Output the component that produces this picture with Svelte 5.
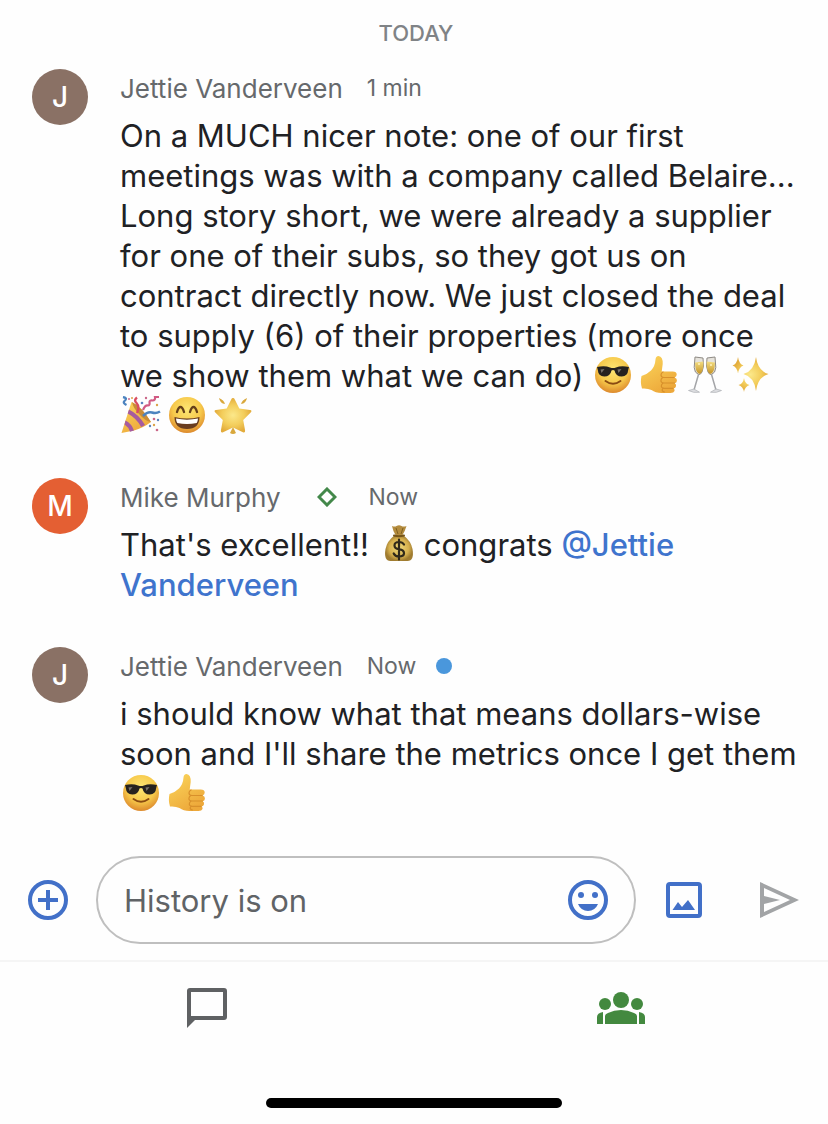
<script>
  let draft = $state('');
  let activeTab = $state('rooms');

  const messages = [
    {
      author: 'Jettie Vanderveen',
      initial: 'J',
      color: 'brown',
      time: '1 min',
      parts: [
        { text: 'On a MUCH nicer note: one of our first meetings was with a company called Belaire... Long story short, we were already a supplier for one of their subs, so they got us on contract directly now. We just closed the deal to supply (6) of their properties (more once we show them what we can do) ' },
        { emoji: 'sunglasses' },
        { emoji: 'thumbs up' },
        { emoji: 'clinking glasses' },
        { emoji: 'sparkles' },
        { emoji: 'party popper' },
        { emoji: 'grinning' },
        { emoji: 'glowing star' }
      ]
    },
    {
      author: 'Mike Murphy',
      initial: 'M',
      color: 'orange',
      time: 'Now',
      external: true,
      parts: [
        { text: "That's excellent!! " },
        { emoji: 'money bag' },
        { text: 'congrats ' },
        { mention: '@Jettie Vanderveen' }
      ]
    },
    {
      author: 'Jettie Vanderveen',
      initial: 'J',
      color: 'brown',
      time: 'Now',
      unread: true,
      parts: [
        { text: "i should know what that means dollars-wise soon and I'll share the metrics once I get them " },
        { emoji: 'sunglasses' },
        { emoji: 'thumbs up' }
      ]
    }
  ];
</script>

{#snippet emoji(name)}
  <svg class="emoji" viewBox="0 0 42 40" role="img" aria-label={name}>
    {#if name === 'sunglasses'}
      <circle cx="21" cy="19" r="18" fill="url(#face)" />
      <path d="M5 11q8-1.500 13 .5q3 1 6 0q5-2 13-.5l-.8 3q-.4 6-6.500 6.500q-6 0-7.200-6q-1.500-1.200-3 0q-1.200 6-7.200 6q-6.100-.5-6.500-6.500z" fill="#26221f" />
      <path d="M8.500 13.500l4-.5l-3 4zM25.500 13.500l4-.5l-3 4z" fill="#77716b" />
      <path d="M13.500 25q7.500 5.500 15 0" fill="none" stroke="#8a4b12" stroke-width="2" stroke-linecap="round" />
    {:else if name === 'thumbs up'}
      <path d="M3.500 20q6-2 9.500-5.500q4-4 4.500-11q.3-3.500 3-3.500q4.500.5 4.200 8l-1 7.500h11q4 0 4 3q0 2-2 3q2.500 1 2.200 3.200q-.2 2-2.200 2.600q1.800 1 1.300 3q-.5 1.800-2.300 2.200q1.300 1 .8 2.500q-.7 2-4 2h-9q-6 0-10-3q-4-2-9.500-1.500q-2-6-.5-12.500z" fill="url(#skin)" />
      <path d="M36 21.500h-10q-3 0-3-2.500q0-2 2-3M36.500 27h-10.500q-3.500-.2-3-3q.2-1.500 1.500-2.300M35 32.300h-9q-3-.3-2.600-2.800q.2-1.500 1.500-2.300M26.500 36q-2.500-.5-2.300-2.200q.1-1 1-1.600" fill="none" stroke="#d8902b" stroke-width="1.200" stroke-linecap="round" />
    {:else if name === 'clinking glasses'}
      <path d="M11 1l8 1q1.500 9-1 14q-1.500 3-3.500 2.500q-4-1.500-4.300-7zM31 1l-8 1q-1.500 9 1 14q1.500 3 3.500 2.500q4-1.500 4.300-7z" fill="#e6e3dc" stroke="#8e8a84" stroke-width="1" />
      <path d="M11 6.500l8.300-1q.5 6.500-1.500 10.500q-1.500 2.200-3 1.800q-3.500-1.800-3.800-11.300zM31 6.500l-8.300-1q-.5 6.500 1.500 10.500q1.500 2.200 3 1.800q3.500-1.800 3.800-11.300z" fill="url(#wine)" />
      <path d="M14.500 18.500l-4.500 15.500M27.500 18.500l4.500 15.500" stroke="#a4a5a8" stroke-width="1.500" />
      <path d="M4.500 34.500l5.500-1.500l5.500 3.200q-6 1.200-11-1.700zM37.500 34.500l-5.500-1.500l-5.500 3.200q6 1.200 11-1.700z" fill="#dcdde0" stroke="#aeb0b4" stroke-width=".7" />
      <circle cx="15" cy="8" r="1" fill="#fff3bf" />
      <circle cx="27" cy="9" r="1" fill="#fff3bf" />
    {:else if name === 'sparkles'}
      <path d="M26 1q1.800 14 12.500 17q-10.700 3-12.500 17q-1.800-14-12.500-17q10.700-3 12.500-17zM8 1q1 7 5.500 8.500q-4.500 1.500-5.500 8q-1-6.500-5.500-8q4.500-1.500 5.500-8.500zM14 22q1 6 5.500 7q-4.500 1.500-5.500 7q-1-5.500-5.500-7q4.500-1 5.500-7z" fill="url(#star)" />
    {:else if name === 'party popper'}
      <path d="M1.500 37l10-31q9 4 19.500 20q-8 6-17 8.500z" fill="url(#skin)" />
      <path d="M9 13.500q10 5 16 15.500l-3.800 2q-5-9-13.500-13.500zM5.500 24.500q6 3 8.500 10l-4 1.200q-1.500-4.700-5.500-7.200z" fill="#a65b9f" />
      <path d="M12 6q10 5 19 20q-6-1-11.500-7.500q-6.500-6.500-7.500-12.500z" fill="#c88c38" />
      <path d="M17 17q3-6-.5-10q-3-3 .5-5.500" fill="none" stroke="#d84c61" stroke-width="2.400" />
      <path d="M3 1q5 1 1.500 4q-2 2 2 4" fill="none" stroke="#4c83bf" stroke-width="2.300" />
      <path d="M23 14q2-5 5-4.500q2 0 1.500-3.500q0-2 3-1.500q3 0 2.500-3.500h4" fill="none" stroke="#d15a83" stroke-width="2.200" />
      <path d="M23 20q5-5 9-3.500q4 1.500 8-1" fill="none" stroke="#4c83bf" stroke-width="2.500" />
      <g fill="#5d83bd"><circle cx="22" cy="7" r="1.300" /><circle cx="30" cy="30" r="1.200" /><circle cx="38" cy="24" r="1.200" /></g>
      <g fill="#ca6789"><circle cx="26" cy="2" r="1.200" /><circle cx="34" cy="23" r="1.300" /><circle cx="37" cy="34" r="1.300" /><circle cx="9" cy="3" r="1" /></g>
      <g fill="#dca34a"><circle cx="37" cy="9" r="1.200" /><circle cx="34" cy="29" r="1.200" /><circle cx="12" cy="2" r="1" /></g>
    {:else if name === 'grinning'}
      <circle cx="21" cy="19" r="18" fill="url(#face)" />
      <path d="M11 16q1.500-5 3.500-5t3.500 5M24 16q1.500-5 3.500-5t3.500 5" fill="none" stroke="#66401a" stroke-width="2.300" stroke-linecap="round" />
      <path d="M8.500 21q12.500 3 25 0q0 12-12.500 12t-12.500-12z" fill="#693d20" />
      <path d="M10 22.500q11 2.300 22 0q-.2 3-1.300 4.500q-9.700 1.800-19.400 0q-1.100-1.500-1.300-4.500z" fill="#fff" />
    {:else if name === 'glowing star'}
      <path d="M21 2q1.200 0 1.800 1.400l4.500 9.200l10.700 1.300q2.600.5.700 2.500l-7.500 7.600l1.900 10.500q.2 2.700-2.200 1.700l-9.900-4.700l-9.900 4.700q-2.400 1-2.200-1.700l1.900-10.500l-7.500-7.600q-1.900-2 .7-2.500l10.700-1.300l4.500-9.200q.6-1.400 1.800-1.400z" fill="url(#star)" />
      <path d="M7 2q5 2 6 6q-5-.5-6-6zM35 2q-5 2-6 6q5-.5 6-6zM21 31l3 6q-3 2-6 0z" fill="#d9a83c" />
    {:else if name === 'money bag'}
      <path d="M14 1q3 1 4.500 0q2.500-1.500 5 0q2 1 5 0q-1.500 5-4 9h-7q-2.500-4-3.500-9z" fill="#b38b3d" />
      <path d="M17 10h8q8 6 9.500 14q2 12-5 12h-17q-7 0-5-12q1.500-8 9.500-14z" fill="url(#bag)" />
      <path d="M18 3l2 6M25 3l-2 6" stroke="#806021" />
      <path d="M16 10.500q5 1.500 10 0" fill="none" stroke="#75551b" stroke-width="2" stroke-linecap="round" />
      <path d="M26 19.500q-1.500-2.500-5-2.500q-4.500 0-4.500 3.500q0 3 4.500 3.700q5 .8 5 4t-5 3.300q-4 0-5.300-3M21 14.500v20" fill="none" stroke="#30291a" stroke-width="2.200" stroke-linecap="round" />
    {/if}
  </svg>
{/snippet}

<div class="chat">
  <svg class="gradients" aria-hidden="true">
    <defs>
      <radialGradient id="face" cx=".5" cy=".35" r=".65">
        <stop offset="0" stop-color="#fde674" />
        <stop offset=".6" stop-color="#f7c94b" />
        <stop offset="1" stop-color="#dd8a2d" />
      </radialGradient>
      <linearGradient id="skin" x2=".6" y2="1">
        <stop offset="0" stop-color="#fbd75c" />
        <stop offset="1" stop-color="#eda83a" />
      </linearGradient>
      <linearGradient id="wine" x2="0" y2="1">
        <stop offset="0" stop-color="#f3dd82" />
        <stop offset="1" stop-color="#c59426" />
      </linearGradient>
      <radialGradient id="star">
        <stop offset="0" stop-color="#fbe88a" />
        <stop offset=".6" stop-color="#f3cd5b" />
        <stop offset="1" stop-color="#e3ac3c" />
      </radialGradient>
      <radialGradient id="bag">
        <stop offset="0" stop-color="#f0da7c" />
        <stop offset=".7" stop-color="#d6b04e" />
        <stop offset="1" stop-color="#a07c30" />
      </radialGradient>
    </defs>
  </svg>

  <main class="messages">
    <h2 class="day">TODAY</h2>
    {#each messages as message}
      <article class="message">
        <div class="avatar {message.color}" aria-hidden="true">{message.initial}</div>
        <div class="content">
          <header class="meta">
            <span class="author">{message.author}</span>
            {#if message.external}
              <svg class="diamond" viewBox="0 0 20 20" role="img" aria-label="Status">
                <path d="M10 2L18 10L10 18L2 10z" fill="none" stroke="currentColor" stroke-width="3" />
              </svg>
            {/if}
            <span class="time">{message.time}</span>
            {#if message.unread}
              <span class="unread" role="img" aria-label="Unread"></span>
            {/if}
          </header>
          <p class="body">
            {#each message.parts as part}{#if part.emoji}{@render emoji(part.emoji)}{:else if part.mention}<a class="mention" href="#profile">{part.mention}</a>{:else}{part.text}{/if}{/each}
          </p>
        </div>
      </article>
    {/each}
  </main>

  <form class="composer" onsubmit={(e) => e.preventDefault()}>
    <button class="icon-button" type="button" aria-label="Add">
      <svg viewBox="0 0 48 48" fill="none" stroke="currentColor" stroke-width="4">
        <circle cx="24" cy="24" r="18" />
        <path d="M24 14v20M14 24h20" />
      </svg>
    </button>
    <div class="field">
      <input type="text" placeholder="History is on" aria-label="Message" bind:value={draft} />
      <button class="icon-button" type="button" aria-label="Emoji">
        <svg viewBox="0 0 48 48" fill="currentColor">
          <circle cx="24" cy="24" r="18" fill="none" stroke="currentColor" stroke-width="4" />
          <circle cx="17" cy="19" r="3" />
          <circle cx="31" cy="19" r="3" />
          <path d="M14 28h20q-3 7-10 7t-10-7z" />
        </svg>
      </button>
    </div>
    <button class="icon-button" type="button" aria-label="Attach image">
      <svg viewBox="0 0 48 48" fill="currentColor">
        <rect x="8" y="8" width="32" height="32" rx="2" fill="none" stroke="currentColor" stroke-width="4" />
        <path d="M12.500 34l5.500-8l4 5l6-7l7 10z" />
      </svg>
    </button>
    <button class="icon-button send" type="submit" aria-label="Send">
      <svg viewBox="0 0 48 48" fill="currentColor" fill-rule="evenodd">
        <path d="M4 6l39 18l-39 18zM8 12v8l16 4l-16 4v8l26-12z" />
      </svg>
    </button>
  </form>

  <nav class="tabs">
    <button class="tab" class:active={activeTab === 'chat'} type="button" aria-label="Chat" onclick={() => (activeTab = 'chat')}>
      <svg viewBox="0 0 48 48" fill="currentColor" fill-rule="evenodd">
        <path d="M7 4h34q3 0 3 3v26q0 3-3 3h-29l-8 8v-37q0-3 3-3zM8 8v24h32v-24z" />
      </svg>
    </button>
    <button class="tab" class:active={activeTab === 'rooms'} type="button" aria-label="Rooms" onclick={() => (activeTab = 'rooms')}>
      <svg viewBox="0 0 48 48" fill="currentColor">
        <circle cx="24" cy="16" r="8" />
        <circle cx="8" cy="20" r="6" />
        <circle cx="40" cy="20" r="6" />
        <path d="M8 40v-8q0-2 3-3q6-3 13-3t13 3q3 1 3 3v8zM0 40v-7q0-4 6-5v12zM48 40v-7q0-4-6-5v12z" />
      </svg>
    </button>
  </nav>
  <div class="home-indicator"></div>
</div>

<style>
  :global(body) {
    background: #fefefe;
  }

  .chat {
    font-family: Inter, "Liberation Sans", sans-serif;
    color: #202124;
  }

  .gradients {
    position: absolute;
    width: 0;
    height: 0;
  }

  .messages {
    display: flex;
    flex-direction: column;
    gap: 42px;
    padding: 19px 28px 42px 32px;
  }

  .day {
    margin: 0 0 -20px;
    text-align: center;
    font-size: 22px;
    line-height: 28px;
    font-weight: 500;
    color: #808386;
  }

  .message {
    display: flex;
    gap: 32px;
  }

  .avatar {
    flex: none;
    width: 56px;
    height: 56px;
    border-radius: 50%;
    color: #fff;
    font-size: 28px;
    line-height: 56px;
    font-weight: 500;
    text-align: center;
  }

  .brown {
    background: #8a7165;
  }

  .orange {
    background: #e45f33;
  }

  .content {
    flex: 1;
    min-width: 0;
  }

  .meta {
    display: flex;
    align-items: center;
    gap: 20px;
    height: 38px;
    margin-bottom: 9px;
    color: #66696c;
  }

  .author {
    margin-right: 4px;
    font-size: 26px;
  }

  .time {
    font-size: 23px;
  }

  .diamond {
    width: 20px;
    height: 20px;
    margin: 0 12px;
    color: #43884a;
  }

  .unread {
    width: 16px;
    height: 16px;
    border-radius: 50%;
    background: #4a97dc;
  }

  .body {
    margin: 0;
    font-size: 31px;
    line-height: 40px;
  }

  .emoji {
    width: 42px;
    height: 40px;
    margin-right: 4px;
    vertical-align: top;
  }

  .mention {
    color: #3f74cd;
    font-weight: 500;
    text-decoration: none;
  }

  .composer {
    display: flex;
    align-items: center;
    gap: 24px;
    padding: 0 24px 16px;
  }

  .field {
    display: flex;
    align-items: center;
    flex: 1;
    min-width: 0;
    height: 88px;
    box-sizing: border-box;
    padding: 0 22px 0 26px;
    border: 2px solid #bfbfbf;
    border-radius: 44px;
  }

  input {
    flex: 1;
    min-width: 0;
    padding: 0;
    border: none;
    outline: none;
    background: transparent;
    color: inherit;
    font: inherit;
    font-size: 31px;
  }

  input::placeholder {
    color: #606366;
    opacity: 1;
  }

  .icon-button,
  .tab {
    flex: none;
    padding: 0;
    border: none;
    background: transparent;
    cursor: pointer;
  }

  .icon-button {
    color: #4270c8;
  }

  .icon-button svg,
  .tab svg {
    display: block;
    width: 48px;
    height: 48px;
  }

  .send {
    margin-left: 24px;
    color: #a2a4a6;
  }

  .tabs {
    display: grid;
    grid-template-columns: 1fr 1fr;
    padding: 22px 0 66px;
    border-top: 2px solid #f5f5f5;
  }

  .tab {
    justify-self: center;
    color: #5f6163;
  }

  .tab.active {
    color: #43893f;
  }

  .home-indicator {
    width: 296px;
    height: 10px;
    margin: 0 auto 16px;
    border-radius: 5px;
    background: #000;
  }
</style>
